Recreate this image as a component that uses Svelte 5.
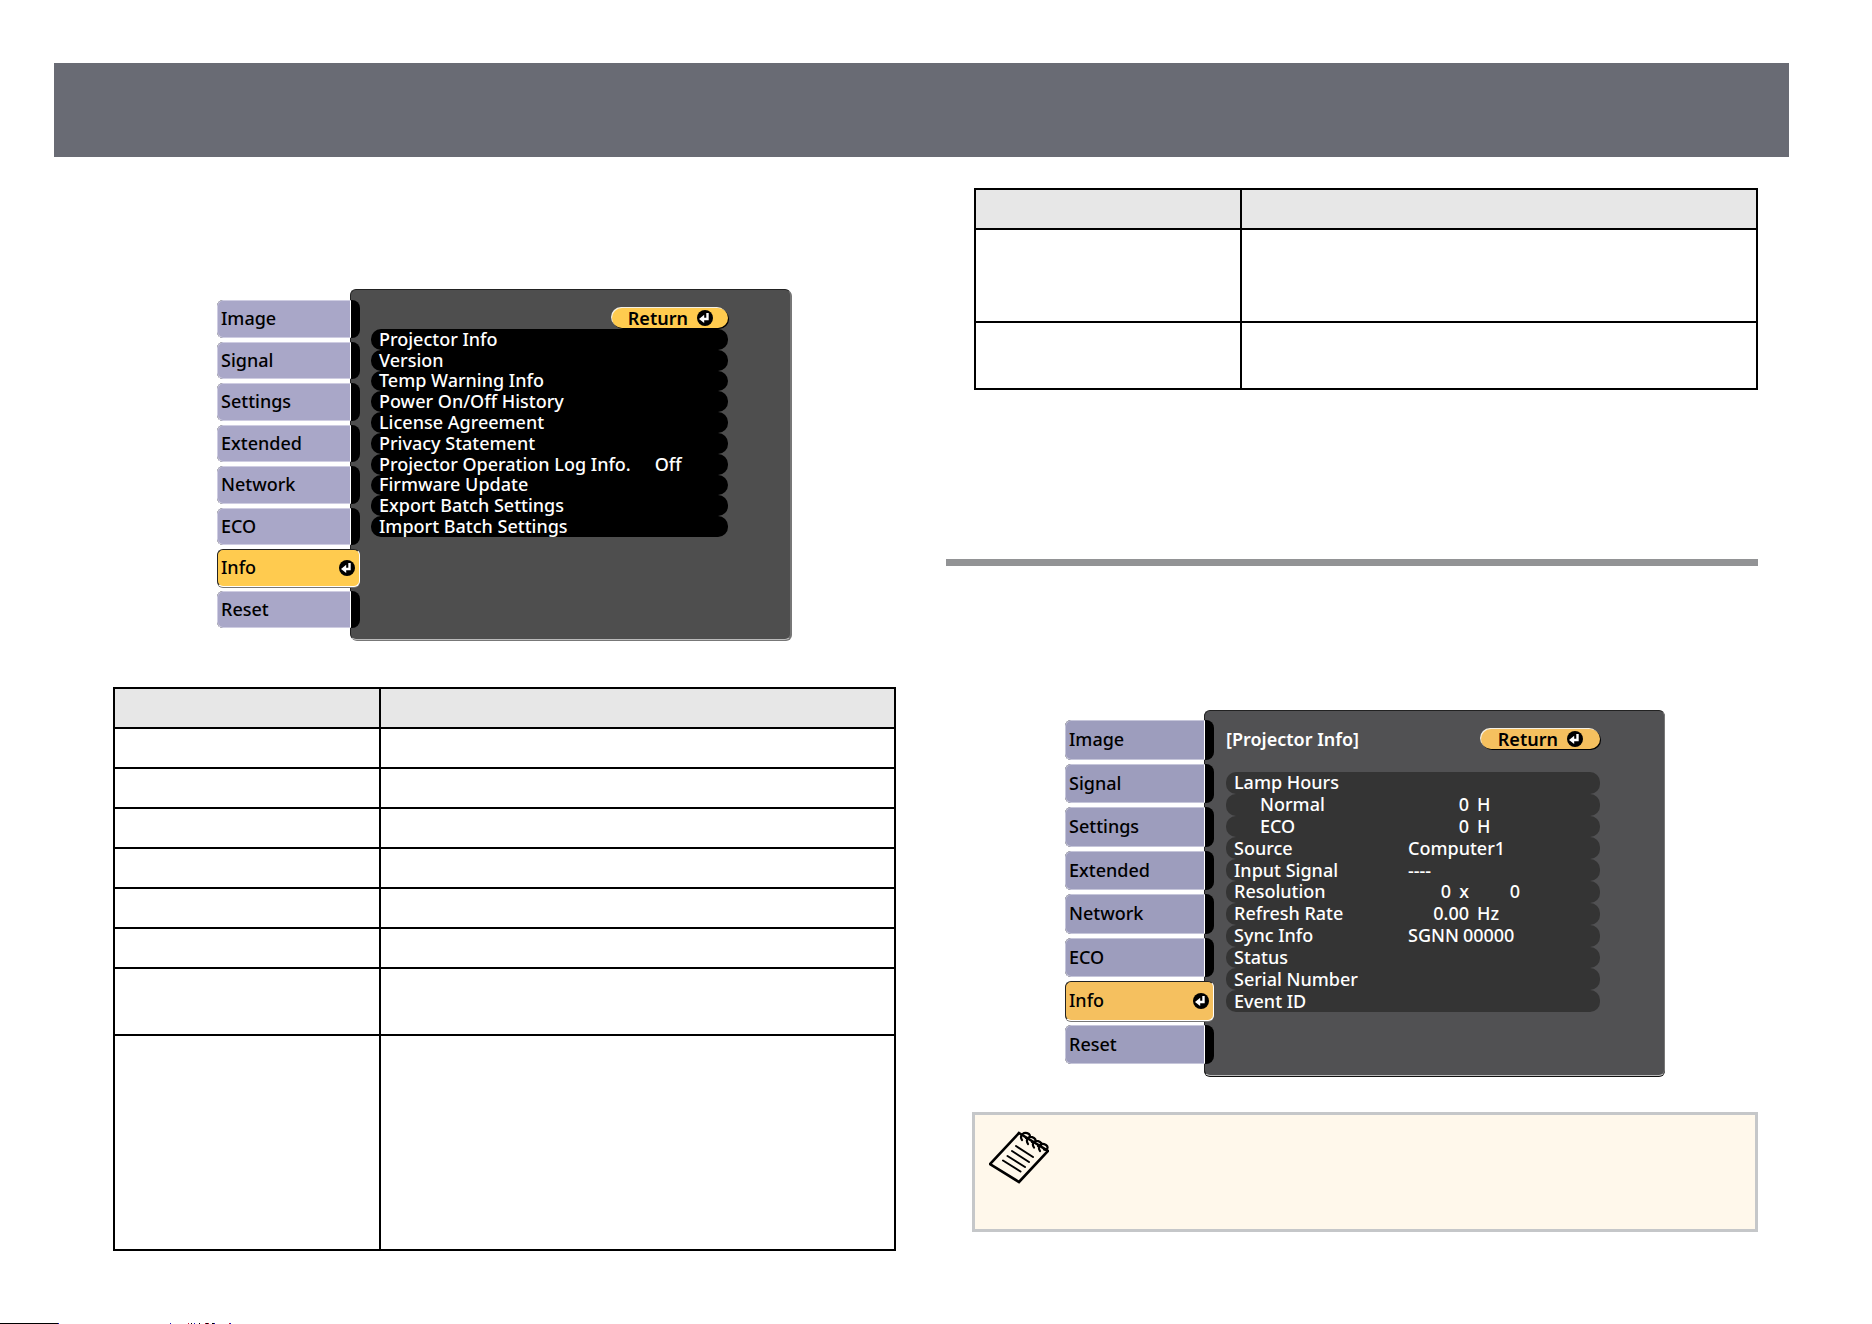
<script>
  const tabs = ['Image', 'Signal', 'Settings', 'Extended', 'Network', 'ECO', 'Info', 'Reset'];

  const menuItems = [
    { label: 'Projector Info' },
    { label: 'Version' },
    { label: 'Temp Warning Info' },
    { label: 'Power On/Off History' },
    { label: 'License Agreement' },
    { label: 'Privacy Statement' },
    { label: 'Projector Operation Log Info.', value: 'Off' },
    { label: 'Firmware Update' },
    { label: 'Export Batch Settings' },
    { label: 'Import Batch Settings' }
  ];

  const details = [
    { label: 'Lamp Hours' },
    { label: 'Normal', sub: true, kind: 'hours', parts: ['0', 'H'] },
    { label: 'ECO', sub: true, kind: 'hours', parts: ['0', 'H'] },
    { label: 'Source', kind: 'plain', parts: ['Computer1'] },
    { label: 'Input Signal', kind: 'plain', parts: ['----'] },
    { label: 'Resolution', kind: 'size', parts: ['0', 'x', '0'] },
    { label: 'Refresh Rate', kind: 'rate', parts: ['0.00', 'Hz'] },
    { label: 'Sync Info', kind: 'plain', parts: ['SGNN', '00000'] },
    { label: 'Status' },
    { label: 'Serial Number' },
    { label: 'Event ID' }
  ];

  const leftRows = ['one', 'one', 'one', 'one', 'one', 'one', 'two', 'eight'];
  const rightRows = ['three', 'two'];
</script>

{#snippet enter()}
  <svg class="enter" viewBox="0 0 16 16" aria-hidden="true">
    <circle cx="8" cy="8" r="8" fill="#000" />
    <path d="M10.5 3V9H6" fill="none" stroke="#fff" stroke-width="2.400" />
    <path d="M7.200 4.800V13L2 9Z" fill="#fff" />
  </svg>
{/snippet}

{#snippet tabList()}
  <nav class="tabs" aria-label="Menu">
    {#each tabs as tab}
      <button type="button" class="tab" class:active={tab === 'Info'}>
        <span class="tab-label">{tab}</span>
        {#if tab === 'Info'}{@render enter()}{/if}
      </button>
    {/each}
  </nav>
{/snippet}

{#snippet grid(rows)}
  <table class="grid">
    <thead>
      <tr class="one"><th class="narrow"></th><th></th></tr>
    </thead>
    <tbody>
      {#each rows as row}
        <tr class={row}><td></td><td></td></tr>
      {/each}
    </tbody>
  </table>
{/snippet}

<div class="page">
  <header class="banner"></header>

  <main class="columns">
    <section class="column left">
      <div class="osd first">
        {@render tabList()}
        <div class="panel">
          <div class="panel-head">
            <button type="button" class="return">Return {@render enter()}</button>
          </div>
          <ul class="rows">
            {#each menuItems as item}
              <li>
                <button type="button" class="row">
                  <span class="text">{item.label}</span>
                  {#if item.value}<span class="text">{item.value}</span>{/if}
                </button>
              </li>
            {/each}
          </ul>
        </div>
      </div>
      {@render grid(leftRows)}
    </section>

    <section class="column right">
      {@render grid(rightRows)}
      <hr />
      <div class="osd second">
        {@render tabList()}
        <div class="panel">
          <div class="panel-head">
            <span>[Projector Info]</span>
            <button type="button" class="return">Return {@render enter()}</button>
          </div>
          <dl class="rows">
            {#each details as item}
              <div class="row">
                <dt class="text" class:sub={item.sub}>{item.label}</dt>
                <dd class={['text', item.kind]}>
                  {#each item.parts ?? [] as part}<span>{part}</span>{/each}
                </dd>
              </div>
            {/each}
          </dl>
        </div>
      </div>
      <aside class="note">
        <svg viewBox="0 0 60 54" aria-hidden="true" fill="none" stroke="#000">
          <path d="M30 2L59 20L30 51L1 33Z" stroke-width="2.6" />
          <path d="M27 15L44 26M23 20L40 31M18.500 25L36 36M14 29.500L31.500 40.500" stroke-width="2" stroke-linecap="round" />
          <path
            d="M33 9C30 4 35 0 40 3C42 5 40 8 37 7M39 13C36 8 40 4 45 7C48 9 46 12 43 11M45 16.500C42 12 46 8 51 11C54 13 52 16 49 15M51 20C48 15 52 11 57 14C60 16 58 20 55 18.500"
            stroke-width="2.200"
            stroke-linecap="round"
          />
        </svg>
      </aside>
    </section>
  </main>

  <footer>
    <svg viewBox="0 0 240 1" aria-hidden="true" shape-rendering="crispEdges">
      <path d="M0 0H58V1H0Z" fill="#000" />
      <path d="M58 0h1v1h-1ZM170 0h1v1h-1ZM194 0h1v1h-1ZM214 0h1v1h-1ZM230 0h1v1h-1Z" fill="#1a10c0" />
      <path d="M188 0h1v1h-1ZM205 0h1v1h-1ZM208 0h1v1h-1ZM229 0h1v1h-1Z" fill="#c01030" />
      <path d="M191 0h1v1h-1ZM199 0h1v1h-1ZM206 0h2v1h-2ZM212 0h2v1h-2Z" fill="#000" />
    </svg>
  </footer>
</div>

<style>
  :global(body) {
    background: #fff;
  }

  .page {
    box-sizing: border-box;
    min-height: 100vh;
    display: flex;
    flex-direction: column;
    padding-top: 63px;
    color: #000;
    font: 500 18px/20px 'Noto Sans', sans-serif;
  }

  .banner {
    height: 94px;
    margin: 0 83px 0 54px;
    background: #696b74;
  }

  .columns {
    flex: 1;
    display: grid;
    grid-template-columns: 783fr 812fr;
    column-gap: 50px;
    margin: 0 114px 0 113px;
    align-items: start;
  }

  .column {
    display: flex;
    flex-direction: column;
  }

  .left {
    padding-top: 132px;
  }

  .right {
    padding-top: 31px;
  }

  .right > .grid {
    margin-left: 28px;
  }

  /* Ruled tables */
  .grid {
    border-collapse: collapse;
    table-layout: fixed;
  }

  .grid th,
  .grid td {
    border: 2px solid #000;
    padding: 0;
  }

  .grid th {
    background: #e7e7e7;
  }

  .grid .narrow {
    width: 34%;
  }

  .one {
    height: 40px;
  }

  .two {
    height: 67px;
  }

  .three {
    height: 93px;
  }

  .eight {
    height: 215px;
  }

  hr {
    width: 100%;
    height: 7px;
    margin: 169px 0 144px;
    border: 0;
    background: #929395;
  }

  /* On-screen menu */
  .osd {
    display: flex;
    --tab: #a9a7c8;
    --tab-edge: #cfcde2;
    --accent: #ffcb4f;
    --panel: #4e4e4e;
    --row: #000;
  }

  .osd button {
    border: 0;
    padding: 0;
    font: inherit;
    color: inherit;
    text-align: left;
    background: none;
  }

  .first {
    height: 351px;
    margin: 0 105px 47px 104px;
  }

  .second {
    height: 366px;
    margin: 0 93px 36px 119px;
    --tab: #9d9dbd;
    --tab-edge: #c6c6da;
    --accent: #f5c05f;
    --panel: #515153;
    --row: #343434;
  }

  .tabs {
    position: relative;
    z-index: 1;
    display: grid;
    grid-auto-rows: 1fr;
    gap: 4px;
    width: 143px;
    margin-right: -10px;
    padding: 11px 0 12px;
    box-sizing: border-box;
  }

  .second .tabs {
    width: 149px;
    padding: 10px 0 12px;
  }

  .osd .tab {
    display: flex;
    align-items: center;
    border-radius: 6px 8px 8px 6px;
    background: #000;
  }

  .tab-label {
    flex: 1;
    align-self: stretch;
    display: flex;
    align-items: center;
    box-sizing: border-box;
    margin-right: 9px;
    padding: 0 0 1px 3px;
    border: 1px solid var(--tab-edge);
    border-right-color: #fff;
    border-radius: 6px 0 0 6px;
    background: var(--tab);
  }

  .osd .active {
    padding-right: 4px;
    background: var(--accent);
    border: 1px solid #222;
    border-right-color: #fff;
    border-bottom-color: #fff;
    border-radius: 6px;
    box-shadow: 0 1px 0 #777;
  }

  .active .tab-label {
    margin: 0;
    border: 0;
    background: none;
  }

  .enter {
    flex: none;
    width: 16px;
    height: 16px;
  }

  .panel {
    flex: 1;
    display: flex;
    flex-direction: column;
    box-sizing: border-box;
    padding: 18px 62px 0 20px;
    border: 1px solid #222;
    border-right-color: #777;
    border-bottom-color: #bbb;
    border-radius: 6px;
    background: var(--panel);
    color: #fff;
    box-shadow: 1px 1px 0 #777;
  }

  .second .panel {
    padding: 18px 64px 0 21px;
    box-shadow: 0 1px 0 #111;
  }

  .panel-head {
    display: flex;
    align-items: center;
    justify-content: space-between;
    font-weight: 600;
  }

  .first .panel-head {
    justify-content: flex-end;
    margin-bottom: 1px;
  }

  .second .panel-head {
    margin-bottom: 23px;
  }

  .osd .return {
    display: flex;
    align-items: center;
    gap: 9px;
    padding: 0 15px 0 16px;
    border-radius: 10px;
    background: var(--accent);
    color: #000;
    box-shadow: 1px 1px 0 #000, -1px -1px 0 #f4f0e4;
  }

  .second .return {
    padding: 0 17px;
  }

  .rows {
    display: grid;
    grid-auto-rows: 1fr;
    height: 208px;
    margin: 0;
    padding: 0;
    list-style: none;
    line-height: 18px;
  }

  .second .rows {
    height: 240px;
  }

  .rows li {
    display: grid;
  }

  .osd .row {
    display: flex;
    align-items: center;
    gap: 24px;
    padding: 0 0 1px 8px;
    border-radius: 10px;
    background: var(--row);
  }

  /* Keeps descenders above the background of the next row */
  .text {
    position: relative;
    z-index: 1;
  }

  .second .row {
    display: grid;
    grid-template-columns: 174px 1fr;
    gap: 0;
  }

  .sub {
    padding-left: 26px;
  }

  dd {
    display: flex;
    gap: 4px;
    margin: 0;
  }

  .hours,
  .size,
  .rate {
    display: grid;
    text-align: right;
    justify-content: start;
    gap: 8px;
  }

  .hours {
    grid-template-columns: 61px auto;
  }

  .size {
    grid-template-columns: 43px 10px 43px;
  }

  .rate {
    grid-template-columns: 61px auto;
  }

  .note {
    box-sizing: border-box;
    height: 120px;
    margin-left: 26px;
    padding: 16px 14px;
    border: 3px solid #c5c7c9;
    background: #fff8eb;
  }

  .note svg {
    width: 60px;
    height: 54px;
  }

  footer {
    display: flex;
  }

  footer svg {
    width: 240px;
    height: 1px;
  }
</style>
